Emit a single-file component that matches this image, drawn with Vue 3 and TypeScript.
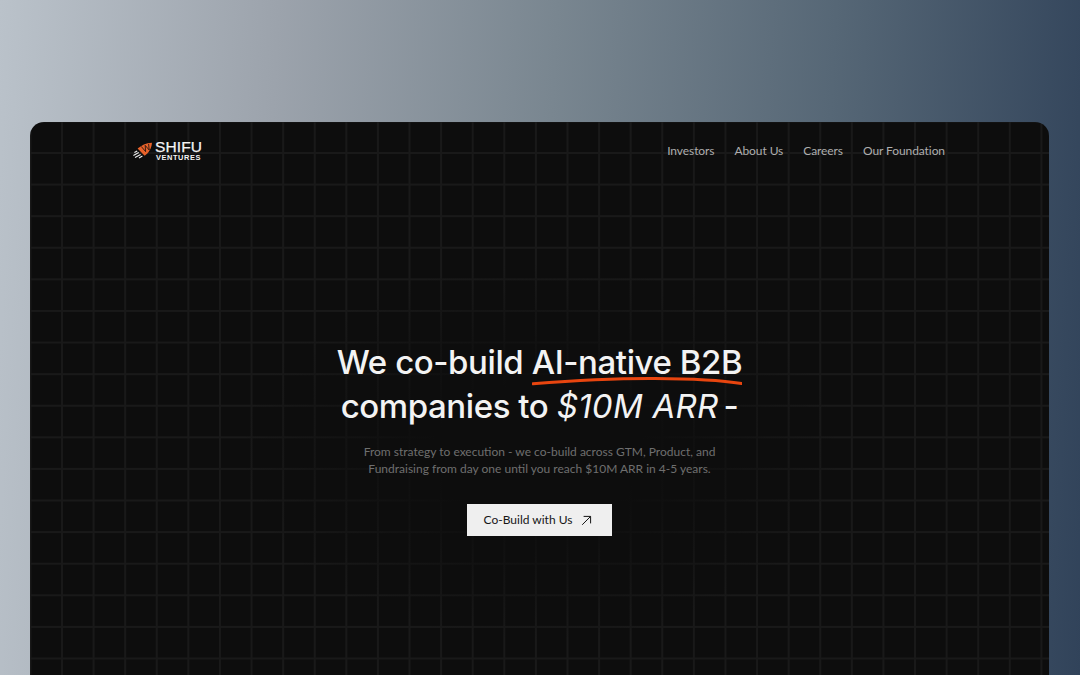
<script setup lang="ts">
const links: string[] = ['Investors', 'About Us', 'Careers', 'Our Foundation']
</script>

<template>
  <div class="page">
    <main class="frame">
      <header class="nav">
        <a class="logo">
          <svg class="mark" width="20" height="18" viewBox="0 0 20 18" fill="none">
            <path d="M4.6 6.6 C8 3.4 13 1 19 .7 C18.6 6 16 10.6 11.6 13.8 Z" fill="#e8622a" />
            <path d="M8.2 4.4 L12.6 9.6 L12.2 3.4 M12.2 3.4 L16.2 8 L15.6 2" stroke="#0d0d0d" stroke-width=".8" />
            <path d="M4.2 9 L1.4 10.6 M5.8 10.6 L.4 13.4 M7.6 12.4 L2 15.4 M9.4 14 L6 16" stroke="#efefef" stroke-width="1.1" />
          </svg>
          <span class="wordmark">
            <span class="shifu">SHIFU</span>
            <span class="ventures">VENTURES</span>
          </span>
        </a>
        <nav class="links">
          <a v-for="link in links" :key="link" class="link">{{ link }}</a>
        </nav>
      </header>
      <section class="hero">
        <h1 class="title">
          We co-build
          <span class="mark-wrap">AI-native B2B
            <svg class="squiggle" viewBox="0 0 214 10" preserveAspectRatio="none" fill="none">
              <path d="M1 7.8 C50 4 90 2.4 125 2.6 C160 2.8 190 4 213 7.6" stroke="#e8450f" stroke-width="3" stroke-linecap="round" />
            </svg>
          </span><br />
          companies to <em class="accent">$10M ARR</em><span class="dash">-</span>
        </h1>
        <p class="sub">From strategy to execution - we co-build across GTM, Product, and<br />Fundraising from day one until you reach $10M ARR in 4-5 years.</p>
        <a class="cta">
          <span class="cta-label">Co-Build with Us</span>
          <svg width="11" height="11" viewBox="0 0 11 11" fill="none">
            <path d="M1.2 9.8 L9.6 1.4 M2.6 1.4 H9.6 V8.4" stroke="#161616" stroke-width="1" />
          </svg>
        </a>
      </section>
    </main>
  </div>
</template>

<style>
html, body { margin: 0; height: 100%; overflow: hidden; }
</style>

<style scoped>
.page {
  box-sizing: border-box;
  width: 1080px;
  height: 675px;
  overflow: hidden;
  padding: 122px 31px 0 30px;
  background: linear-gradient(93deg, #bac2ca 0%, #9ca3ac 25%, #798690 50%, #566776 75%, #31435a 100%);
}
.frame {
  position: relative;
  height: 720px;
  border-radius: 14px 14px 0 0;
  overflow: hidden;
  background-color: #0d0d0d;
  background-image:
    linear-gradient(to right, #191919 2px, transparent 2px),
    linear-gradient(to bottom, #191919 2px, transparent 2px);
  background-size: 31.6px 31.6px;
  background-position: 31px 30px;
}
.frame::before {
  content: '';
  position: absolute;
  inset: 0;
  background: radial-gradient(ellipse 300px 190px at 510px 330px, #0d0d0d 35%, rgba(13, 13, 13, 0) 100%);
}
.nav {
  position: relative;
  display: flex;
  justify-content: space-between;
  align-items: center;
  padding: 18px 104px 0 103px;
}
.logo { display: flex; align-items: center; gap: 2px; }
.wordmark { display: flex; flex-direction: column; color: #f4f4f4; font-family: "Liberation Sans", sans-serif; }
.shifu { font-size: 15.5px; line-height: 13px; font-weight: 400; letter-spacing: 0.1px; -webkit-text-stroke: 0.25px #f4f4f4; }
.ventures { font-size: 7.4px; line-height: 9px; font-weight: 700; letter-spacing: 0.6px; margin-left: 1px; }
.links { display: flex; gap: 20px; }
.link {
  font-family: "Lato", sans-serif;
  font-size: 12px;
  line-height: 16px;
  letter-spacing: -0.08px;
  color: #aeaeae;
}
.hero {
  position: relative;
  display: flex;
  flex-direction: column;
  align-items: center;
  padding-top: 178px;
}
.title {
  margin: 0;
  text-align: center;
  font-family: "Inter", sans-serif;
  font-size: 33px;
  line-height: 44px;
  font-weight: 450;
  letter-spacing: -0.42px;
  color: #f3f3f3;
}
.mark-wrap { position: relative; display: inline-block; }
.squiggle { position: absolute; left: 0; bottom: -2px; width: 100%; height: 10px; }
.accent { font-style: italic; letter-spacing: 0.25px; }
.dash { margin-left: 5px; }
.sub {
  margin: 15px 0 0;
  text-align: center;
  font-family: "Lato", sans-serif;
  font-size: 12px;
  line-height: 17px;
  color: #6f6f6f;
}
.cta {
  display: flex;
  align-items: center;
  gap: 9px;
  margin-top: 27px;
  height: 32px;
  padding: 0 20px 0 17px;
  background: #efefef;
  color: #161616;
  font-family: "Lato", sans-serif;
  font-size: 12px;
}
.cta-label { margin-top: -1px; }
</style>
